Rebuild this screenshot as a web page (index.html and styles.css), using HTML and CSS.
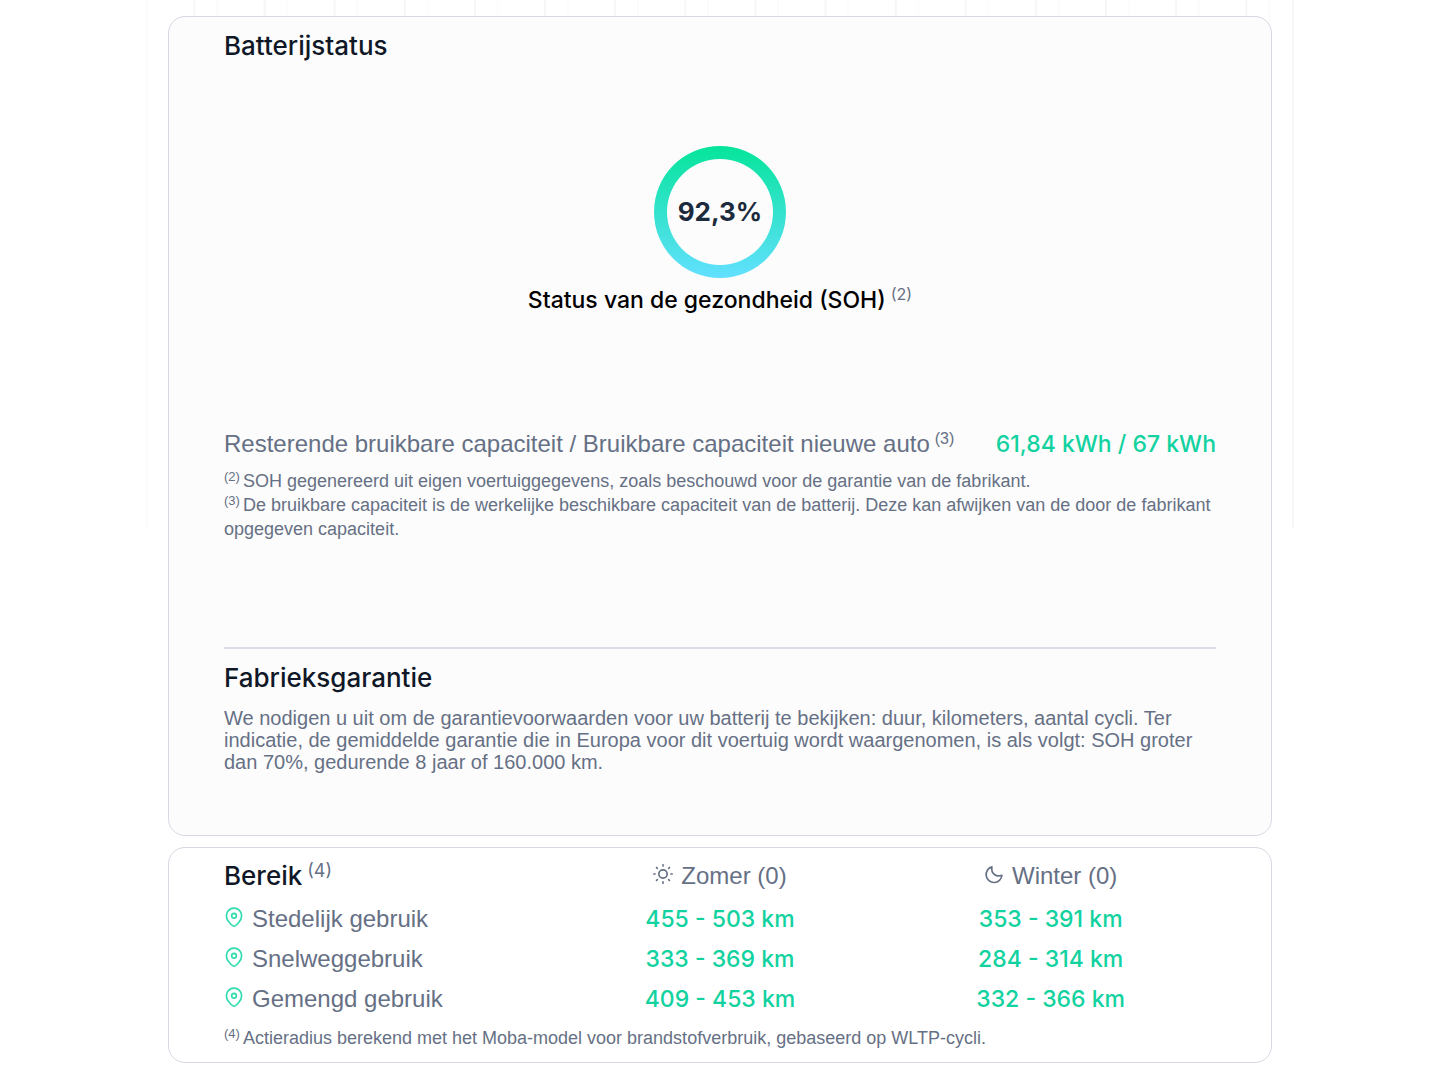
FILE: index.html
```html
<!DOCTYPE html>
<html lang="nl">
<head>
    <meta charset="utf-8">
    <meta name="viewport" content="width=device-width, initial-scale=1">
    <title>Batterijstatus</title>
    <link rel="stylesheet" href="styles.css">
</head>
<body>
    <svg class="sprite" aria-hidden="true">
        <symbol id="icon-pin" viewBox="0 0 24 24">
            <path d="M12 23c-1.500 0-9.200-6-9.200-12.500a9.200 9.200 0 0 1 18.400 0c0 6.500-7.700 12.500-9.200 12.500z"/>
            <circle cx="12" cy="10.500" r="2.800"/>
        </symbol>
        <symbol id="icon-sun" viewBox="0 0 24 24">
            <circle cx="12" cy="12" r="5"/>
            <path d="M12 1v1.500M12 21.500v1.500M1 12h1.500M21.500 12h1.500M4.200 4.200l1 1M18.800 18.800l1 1M4.200 19.800l1-1M18.800 5.200l1-1"/>
        </symbol>
        <symbol id="icon-moon" viewBox="0 0 24 24">
            <path d="M9.500 3.500A9.500 9.500 0 1 0 21.500 13.500C15 16 8 12 9.500 3.500z"/>
        </symbol>
    </svg>

    <main class="report">
        <section class="card card-battery">
            <h2>Batterijstatus</h2>

            <div class="soh">
                <div class="gauge">
                    <svg viewBox="0 0 132 132" aria-hidden="true">
                        <defs>
                            <linearGradient id="ring" x1="0" y1="0" x2="0" y2="1">
                                <stop offset="0" stop-color="#05e59a"/>
                                <stop offset="1" stop-color="#62e0ff"/>
                            </linearGradient>
                        </defs>
                        <path fill="url(#ring)" fill-rule="evenodd" d="M66 0a66 66 0 1 1 0 132a66 66 0 1 1 0-132zM66 13a53 53 0 1 0 0 106a53 53 0 1 0 0-106z"/>
                    </svg>
                    <span class="gauge-value">92,3%</span>
                </div>
                <p class="soh-label">Status van de gezondheid (SOH)<sup>(2)</sup></p>
            </div>

            <div class="capacity">
                <span>Resterende bruikbare capaciteit / Bruikbare capaciteit nieuwe auto<sup>(3)</sup></span>
                <span class="value">61,84 kWh / 67 kWh</span>
            </div>
            <div class="notes">
                <p><sup>(2)</sup>SOH gegenereerd uit eigen voertuiggegevens, zoals beschouwd voor de garantie van de fabrikant.</p>
                <p><sup>(3)</sup>De bruikbare capaciteit is de werkelijke beschikbare capaciteit van de batterij. Deze kan afwijken van de door de fabrikant opgegeven capaciteit.</p>
            </div>

            <div class="warranty">
                <h2>Fabrieksgarantie</h2>
                <p>We nodigen u uit om de garantievoorwaarden voor uw batterij te bekijken: duur, kilometers, aantal cycli. Ter indicatie, de gemiddelde garantie die in Europa voor dit voertuig wordt waargenomen, is als volgt: SOH groter dan 70%, gedurende 8 jaar of 160.000 km.</p>
            </div>
        </section>

        <section class="card card-range">
            <table class="range">
                <thead>
                    <tr>
                        <th scope="col"><h2>Bereik<sup>(4)</sup></h2></th>
                        <th scope="col"><svg class="icon"><use href="#icon-sun"/></svg>Zomer (0)</th>
                        <th scope="col"><svg class="icon"><use href="#icon-moon"/></svg>Winter (0)</th>
                    </tr>
                </thead>
                <tbody>
                    <tr>
                        <th scope="row"><svg class="icon icon-pin"><use href="#icon-pin"/></svg>Stedelijk gebruik</th>
                        <td class="value">455 - 503 km</td>
                        <td class="value">353 - 391 km</td>
                    </tr>
                    <tr>
                        <th scope="row"><svg class="icon icon-pin"><use href="#icon-pin"/></svg>Snelweggebruik</th>
                        <td class="value">333 - 369 km</td>
                        <td class="value">284 - 314 km</td>
                    </tr>
                    <tr>
                        <th scope="row"><svg class="icon icon-pin"><use href="#icon-pin"/></svg>Gemengd gebruik</th>
                        <td class="value">409 - 453 km</td>
                        <td class="value">332 - 366 km</td>
                    </tr>
                </tbody>
            </table>
            <div class="notes">
                <p><sup>(4)</sup>Actieradius berekend met het Moba-model voor brandstofverbruik, gebaseerd op WLTP-cycli.</p>
            </div>
        </section>
    </main>
</body>
</html>
```
FILE: styles.css
```css
* {
    box-sizing: border-box;
}

body {
    margin: 0;
    background: #fff;
    color: #667085;
    font-family: "Liberation Sans", Arial, sans-serif;
    font-size: 24px;
    line-height: 32px;
}

h2, p {
    margin: 0;
}

h2 {
    color: #101828;
    font-family: Inter, sans-serif;
    font-size: 26px;
    font-weight: 500;
    line-height: 32px;
}

sup {
    margin-left: 5px;
    color: #667085;
    font-size: 16px;
    font-weight: 400;
    line-height: 0;
    vertical-align: 8px;
}

h2 sup {
    font-size: 18px;
}

.sprite {
    display: none;
}

.report {
    position: relative;
    display: flex;
    flex-direction: column;
    gap: 11px;
    max-width: 1148px;
    margin: 0 auto;
    padding: 16px 22px;
}

/* faint grid lines behind the cards */
.report::before {
    content: "";
    position: absolute;
    inset: 0 0 auto 0;
    height: 528px;
    z-index: -1;
    border-right: 2px solid #f6f6f7;
    background-image: linear-gradient(to right, #fcfcfc 2px, transparent 2px, transparent 47px, #f6f6f7 47px, #f6f6f7 49px, transparent 49px);
    background-size: 6.12% 100%;
}

.card {
    padding: 13px 55px;
    border: 1px solid #d6d9e2;
    border-radius: 17px;
    background: #fff;
}

.card-battery {
    padding-bottom: 62px;
    background: #fcfcfc;
}

.card-range {
    padding-top: 8px;
    padding-bottom: 12px;
}

.soh {
    display: flex;
    flex-direction: column;
    align-items: center;
    margin-top: 84px;
}

.gauge {
    display: grid;
    place-items: center;
    width: 132px;
}

.gauge svg,
.gauge-value {
    grid-area: 1 / 1;
}

.gauge svg {
    width: 132px;
    height: 132px;
}

.gauge-value {
    color: #1b2a3c;
    font-family: Inter, sans-serif;
    font-size: 26px;
    font-weight: 700;
}

.soh-label {
    margin-top: 6px;
    color: #000;
    font-family: Inter, sans-serif;
    font-size: 23px;
    font-weight: 500;
}

.capacity {
    display: flex;
    justify-content: space-between;
    gap: 24px;
    margin-top: 112px;
}

.value {
    color: #12d2a0;
    font-family: Inter, sans-serif;
    font-size: 23px;
    font-weight: 500;
}

.notes {
    margin-top: 7px;
    font-size: 18px;
    line-height: 24px;
}

.notes sup {
    margin: 0 3px 0 0;
    font-size: 13px;
    vertical-align: 6px;
}

.card-battery .notes {
    margin-top: 9px;
}

.warranty {
    margin-top: 106px;
    padding-top: 13px;
    border-top: 2px solid #d9dce8;
}

.warranty p {
    margin-top: 13px;
    font-size: 20px;
    line-height: 22px;
}

.range {
    width: 100%;
    table-layout: fixed;
    border-collapse: collapse;
}

.range th,
.range td {
    height: 40px;
    padding: 0;
    text-align: center;
}

.range th {
    font-weight: 400;
}

.range th:first-child {
    text-align: left;
}

.range thead th {
    height: 43px;
    padding-bottom: 3px;
}

.icon {
    width: 20px;
    height: 20px;
    margin-right: 8px;
    fill: none;
    stroke: currentColor;
    stroke-width: 2;
    stroke-linecap: round;
    stroke-linejoin: round;
}

.icon-pin {
    color: #2fdcae;
}
```
